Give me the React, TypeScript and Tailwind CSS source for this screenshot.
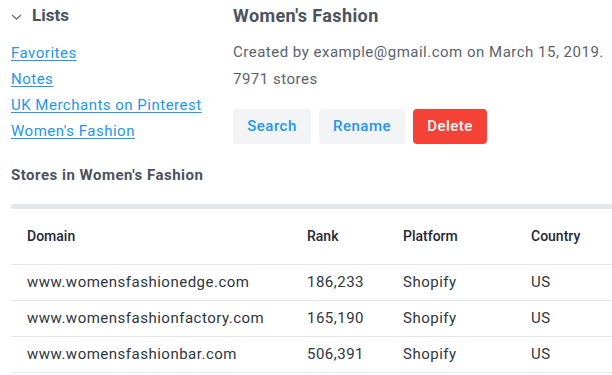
interface Store {
  domain: string
  rank: string
  platform: string
  country: string
}

const lists = ['Favorites', 'Notes', 'UK Merchants on Pinterest', "Women's Fashion"]

const stores: Store[] = [
  { domain: 'www.womensfashionedge.com', rank: '186,233', platform: 'Shopify', country: 'US' },
  { domain: 'www.womensfashionfactory.com', rank: '165,190', platform: 'Shopify', country: 'US' },
  { domain: 'www.womensfashionbar.com', rank: '506,391', platform: 'Shopify', country: 'US' },
]

export const App = () => {
  return (
    <div
      className="w-[612px] h-[375px] overflow-hidden bg-white pl-[11px]"
      style={{ fontFamily: 'Roboto, "Liberation Sans", sans-serif' }}
    >
      <div className="flex pt-[4px]">
        {/* Sidebar */}
        <div className="w-[222px] shrink-0">
          <div className="flex items-center h-[24px] text-[17px] font-bold text-[#4b5260]">
            <svg width="11" height="6" viewBox="0 0 11 6" className="mr-[10px] mt-[1px]">
              <polyline points="1,1 5.5,5 10,1" fill="none" stroke="#6b7280" strokeWidth="1.4" />
            </svg>
            Lists
          </div>
          <ul className="mt-[12px] flex flex-col">
            {lists.map((name) => (
              <li key={name} className="leading-[26px] text-[15px] tracking-[0.5px]">
                <a href="#" className="text-[#2196f3] underline underline-offset-2">
                  {name}
                </a>
              </li>
            ))}
          </ul>
          <h3 className="mt-[21px] text-[15px] leading-[20px] tracking-[0.5px] font-bold text-[#4b5260]">
            Stores in Women's Fashion
          </h3>
        </div>

        {/* Detail */}
        <div className="flex-1">
          <h2 className="h-[24px] leading-[24px] text-[18px] tracking-[0.4px] font-bold text-[#4b5260]">
            Women's Fashion
          </h2>
          <div className="mt-[11px] text-[15px] leading-[27px] tracking-[0.5px] text-[#5b6270]">
            <p>Created by example@gmail.com on March 15, 2019.</p>
            <p>7971 stores</p>
          </div>
          <div className="mt-[16px] flex gap-2 text-[15px] tracking-[0.5px] font-medium">
            <button className="h-[35px] w-[78px] rounded bg-[#f3f4f6] text-[#2196f3]">Search</button>
            <button className="h-[35px] w-[86px] rounded bg-[#f3f4f6] text-[#2196f3]">Rename</button>
            <button className="h-[35px] w-[74px] rounded bg-[#f44336] text-white">Delete</button>
          </div>
        </div>
      </div>

      {/* Table */}
      <div className="mt-[19px] w-[640px]">
        <div className="h-[5px] rounded-l-full bg-[#e5e7eb]"></div>
        <table className="w-full border-collapse text-left">
          <thead>
            <tr className="border-b border-[#e5e7eb]">
              <th className="h-[55px] w-[280px] pl-4 text-[14px] font-medium text-[#1f2937]">Domain</th>
              <th className="w-[96px] pl-4 text-[14px] font-medium text-[#1f2937]">Rank</th>
              <th className="w-[128px] pl-4 text-[14px] font-medium text-[#1f2937]">Platform</th>
              <th className="pl-4 text-[14px] font-medium text-[#1f2937]">Country</th>
            </tr>
          </thead>
          <tbody className="text-[15px] tracking-[0.5px] text-[#2f3542]">
            {stores.map((s) => (
              <tr key={s.domain} className="border-b border-[#e5e7eb]">
                <td className="h-[36px] pl-4">{s.domain}</td>
                <td className="pl-4">{s.rank}</td>
                <td className="pl-4">{s.platform}</td>
                <td className="pl-4">{s.country}</td>
              </tr>
            ))}
          </tbody>
        </table>
      </div>
    </div>
  )
}

export default App
